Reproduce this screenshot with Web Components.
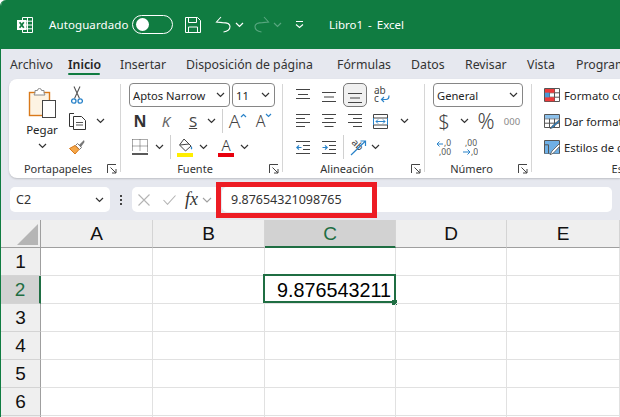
<!DOCTYPE html>
<html lang="es">
<head>
<meta charset="utf-8">
<title>Libro1 - Excel</title>
<style>
html, body { margin: 0; padding: 0; background: #fff; }
body { width: 620px; height: 417px; overflow: hidden; font-family: "Noto Sans", sans-serif; }
</style>
</head>
<body>
<xl-app>
  <xl-title-bar slot="top"></xl-title-bar>
  <xl-tabs></xl-tabs>
  <xl-ribbon>
    <xl-group label="Portapapeles" width="112" pad="9" launcher>
      <div style="display:flex;height:78px">
        <div style="width:48px;display:flex;flex-direction:column;align-items:center;font-size:11.5px;color:#242424;line-height:16px">
          <xl-icon name="paste" style="margin-top:6px"></xl-icon>
          <span style="margin-top:4px">Pegar</span>
          <xl-icon name="chev" style="margin-top:5px"></xl-icon>
        </div>
        <div>
          <xl-row><xl-tool w="22"><xl-icon name="cut"></xl-icon></xl-tool></xl-row>
          <xl-row><xl-tool w="22"><xl-icon name="copy"></xl-icon></xl-tool><xl-tool w="24"><xl-icon name="chev"></xl-icon></xl-tool></xl-row>
          <xl-row><xl-tool w="22"><xl-icon name="brush"></xl-icon></xl-tool></xl-row>
        </div>
      </div>
    </xl-group>
    <xl-group label="Fuente" width="162" pad="7" launcher>
      <xl-row><xl-select w="101" style="margin-left:1px">Aptos Narrow</xl-select><xl-select w="43" style="margin-left:2px">11</xl-select></xl-row>
      <xl-row>
        <xl-tool w="24"><b style="font-size:16px">N</b></xl-tool>
        <xl-tool w="28"><i style="font-size:15px;color:#666">K</i></xl-tool>
        <xl-tool w="26"><u style="font-size:15px;color:#444">S</u></xl-tool>
        <xl-tool w="10"><xl-icon name="chev"></xl-icon></xl-tool>
        <xl-tool w="13"><xl-sep></xl-sep></xl-tool>
        <xl-tool w="18"><span style="font-size:19px;color:#444;font-weight:300">A</span><xl-icon name="caretup" style="margin:-11px 0 0 0"></xl-icon></xl-tool>
        <xl-tool w="34"><span style="font-size:16px;color:#444;font-weight:300">A</span><xl-icon name="caretdown" style="margin:-11px 0 0 0"></xl-icon></xl-tool>
      </xl-row>
      <xl-row>
        <xl-tool w="24"><xl-icon name="borders"></xl-icon></xl-tool>
        <xl-tool w="14"><xl-icon name="chev"></xl-icon></xl-tool>
        <xl-tool w="8"><xl-sep></xl-sep></xl-tool>
        <xl-tool w="22"><xl-icon name="fill"></xl-icon></xl-tool>
        <xl-tool w="14"><xl-icon name="chev"></xl-icon></xl-tool>
        <xl-tool w="6"></xl-tool>
        <xl-tool w="20"><xl-color-a></xl-color-a></xl-tool>
        <xl-tool w="16"><xl-icon name="chev"></xl-icon></xl-tool>
      </xl-row>
    </xl-group>
    <xl-group label="Alineación" width="142" pad="7" launcher>
      <xl-row>
        <xl-tool w="26"><xl-icon name="atop"></xl-icon></xl-tool>
        <xl-tool w="26"><xl-icon name="amid"></xl-icon></xl-tool>
        <xl-tool w="24" selected><xl-icon name="abot"></xl-icon></xl-tool>
        <xl-tool w="27"><xl-icon name="wrap"></xl-icon></xl-tool>
      </xl-row>
      <xl-row>
        <xl-tool w="26"><xl-icon name="aleft"></xl-icon></xl-tool>
        <xl-tool w="26"><xl-icon name="acenter"></xl-icon></xl-tool>
        <xl-tool w="26"><xl-icon name="aright"></xl-icon></xl-tool>
        <xl-tool w="24"><xl-icon name="merge"></xl-icon></xl-tool>
        <xl-tool w="24"><xl-icon name="chev"></xl-icon></xl-tool>
      </xl-row>
      <xl-row>
        <xl-tool w="26"><xl-icon name="outdent"></xl-icon></xl-tool>
        <xl-tool w="26"><xl-icon name="indent"></xl-icon></xl-tool>
        <xl-tool w="2"><xl-sep></xl-sep></xl-tool>
        <xl-tool w="28"><xl-icon name="orient"></xl-icon></xl-tool>
        <xl-tool w="6"><xl-icon name="chev"></xl-icon></xl-tool>
      </xl-row>
    </xl-group>
    <xl-group label="Número" width="107" pad="8" launcher>
      <xl-row><xl-select w="90">General</xl-select></xl-row>
      <xl-row>
        <xl-tool w="22"><span style="font-size:20px;color:#444;font-weight:300">$</span></xl-tool>
        <xl-tool w="18"><xl-icon name="chev"></xl-icon></xl-tool>
        <xl-tool w="26"><span style="font-size:21px;color:#444;font-weight:300">%</span></xl-tool>
        <xl-tool w="26"><span style="font-size:9.5px;color:#888">000</span></xl-tool>
      </xl-row>
      <xl-row>
        <xl-tool w="22"><xl-icon name="decless"></xl-icon></xl-tool>
        <xl-tool w="30"><xl-icon name="decmore"></xl-icon></xl-tool>
      </xl-row>
    </xl-group>
    <xl-group label="Estilos" width="206" pad="9" launcher plain>
      <xl-style-row icon="condfmt">Formato condicional</xl-style-row>
      <xl-style-row icon="tblfmt">Dar formato como tabla</xl-style-row>
      <xl-style-row icon="cellfmt">Estilos de celda</xl-style-row>
    </xl-group>
  </xl-ribbon>
  <xl-formula-bar name="C2" value="9.87654321098765"></xl-formula-bar>
  <xl-sheet></xl-sheet>
</xl-app>

<script>
const chevron = '<svg width="9" height="6" viewBox="0 0 9 6"><path d="M1 1l3.5 3.5L8 1" fill="none" stroke="#333" stroke-width="1.2"/></svg>';
const lines = (rows) => rows.map(([x1, x2, y]) => `<path d="M${x1} ${y}H${x2}" stroke="#444" stroke-width="1.1"/>`).join("");
const ICONS = {
  chev: chevron,
  excel: '<svg width="16" height="16" viewBox="0 0 16 16"><path d="M5.5.5h10v15h-10zM10.5.5v15M5.5 4.2h10M5.5 8h10M5.5 11.8h10" fill="none" stroke="#fff"/><rect y="3" width="9.5" height="10" fill="#fff"/><path d="M2.6 5.2l4.2 5.6M6.8 5.2l-4.2 5.6" stroke="#107c41" stroke-width="1.7"/></svg>',
  save: '<svg width="16" height="16" viewBox="0 0 16 16"><path d="M.5.5h12l3 3v12H.5zM3.5.5v5h8v-5M3.5 15.5V10h9v5.5" fill="none" stroke="#fff"/></svg>',
  undo: '<svg width="16" height="17" viewBox="0 0 16 17"><path d="M6 1L1.5 6l6 .6C12 6.600 15 7.600 15 10.500 15 13.500 12 15.500 8.500 16" fill="none" stroke="#fff" stroke-width="1.1"/></svg>',
  redo: '<svg width="16" height="17" viewBox="0 0 16 17"><path d="M10 1l4.500 5-6 .6C4 6.600 1 7.600 1 10.500 1 13.500 4 15.500 7.500 16" fill="none" stroke="#58a67f" stroke-width="1.1"/></svg>',
  qat: '<svg width="9" height="8" viewBox="0 0 9 8"><path d="M1 .5h7M1 3.500l3.500 3 3.500-3" fill="none" stroke="#fff" stroke-width="1.1"/></svg>',
  paste: '<svg width="28" height="30" viewBox="0 0 28 30"><rect x="1.500" y="4.500" width="20" height="23" fill="#fdf3e3" stroke="#d9791a" stroke-width="1.400"/><path d="M7 5V2.500h2.500a2 2 0 0 1 4 0H16V5l1 2H6z" fill="#fff" stroke="#8a8a8a"/><rect x="14.500" y="12.500" width="13" height="17" fill="#fff" stroke="#444"/></svg>',
  cut: '<svg width="12" height="18" viewBox="0 0 12 18"><path d="M3 .5l5.500 12M9 .5L3.500 12.500" fill="none" stroke="#555" stroke-width="1.100"/><circle cx="2.800" cy="15" r="2.200" fill="none" stroke="#2a83c9" stroke-width="1.300"/><circle cx="9.200" cy="15" r="2.200" fill="none" stroke="#2a83c9" stroke-width="1.300"/></svg>',
  copy: '<svg width="17" height="17" viewBox="0 0 17 17"><path d="M5 .5H.5v13H5" fill="none" stroke="#333"/><path d="M4.500 3.500h8l4 4v9h-12z" fill="#fff" stroke="#333"/><path d="M7 9.500h7M7 12h7" stroke="#555"/></svg>',
  brush: '<svg width="16" height="16" viewBox="0 0 16 16"><path d="M15 1l-5 5 2 2 3.500-5z" fill="#777"/><path d="M8.500 4.500l4 4-2 2-4-4z" fill="#fff" stroke="#777"/><path d="M6 6.500l4 4-4 4.500-5.500-5.500z" fill="#f4a74a" stroke="#d9791a"/></svg>',
  caretup: '<svg width="7" height="5" viewBox="0 0 7 5"><path d="M1 4l2.500-2.500L6 4" fill="none" stroke="#2a83c9" stroke-width="1.200"/></svg>',
  caretdown: '<svg width="7" height="5" viewBox="0 0 7 5"><path d="M1 1l2.500 2.500L6 1" fill="none" stroke="#2a83c9" stroke-width="1.200"/></svg>',
  borders: '<svg width="16" height="16" viewBox="0 0 16 16"><path d="M.5.500h15v12M.5.500v12M8 .5v12M.5 7h15" fill="none" stroke="#555" stroke-dasharray="1 1"/><path d="M0 15h16" stroke="#222" stroke-width="1.300"/></svg>',
  fill: '<svg width="16" height="19" viewBox="0 0 16 19"><path d="M7 1l7 7-5.500 5L2.500 7z" fill="#fff" stroke="#444"/><path d="M3 7l9-1" stroke="#444"/><path d="M14.500 8c1 1.500 1 3 0 3.500-1-.5-1-2 0-3.500z" fill="#2a83c9"/><rect y="15" width="16" height="4" fill="#ffee00"/></svg>',
  launcher: '<svg width="10" height="10" viewBox="0 0 10 10"><path d="M.5 9V.5H9M3.500 3.500l5.500 5.500M9 5v4H5" fill="none" stroke="#444"/></svg>',
  atop: `<svg width="14" height="12" viewBox="0 0 14 12">${lines([[0, 14, .5], [2, 12, 5.500], [0, 14, 9.500]])}</svg>`,
  amid: `<svg width="14" height="12" viewBox="0 0 14 12" style="margin-top:5px">${lines([[0, 14, .5], [2, 12, 5], [0, 14, 9.500]])}</svg>`,
  abot: `<svg width="14" height="12" viewBox="0 0 14 12" style="margin-top:6px">${lines([[0, 14, 1.500], [2, 12, 6], [0, 14, 10.500]])}</svg>`,
  wrap: '<svg width="16" height="18" viewBox="0 0 16 18"><text x="0" y="8" font-family="Noto Sans" font-size="10" fill="#444">ab</text><text x="0" y="16" font-family="Noto Sans" font-size="10" fill="#444">c</text><path d="M15 9.500c0 3-1.500 4-3 4H7.500M10 11l-2.500 2.500L10 16" fill="none" stroke="#2a83c9" stroke-width="1.200"/></svg>',
  aleft: `<svg width="14" height="14" viewBox="0 0 14 14">${lines([[0, 14, .5], [0, 9, 4.500], [0, 14, 8.500], [0, 9, 12.500]])}</svg>`,
  acenter: `<svg width="14" height="14" viewBox="0 0 14 14">${lines([[0, 14, .5], [2.500, 11.500, 4.500], [0, 14, 8.500], [2.500, 11.500, 12.500]])}</svg>`,
  aright: `<svg width="14" height="14" viewBox="0 0 14 14">${lines([[0, 14, .5], [5, 14, 4.500], [0, 14, 8.500], [5, 14, 12.500]])}</svg>`,
  merge: '<svg width="15" height="15" viewBox="0 0 15 15"><path d="M.5.500h14v14H.5zM.5 4h14M.5 11h14" fill="none" stroke="#444"/><path d="M.5 4v7M14.500 4v7" stroke="#2a83c9"/><path d="M3 7.500h9M5 5.500l-2 2 2 2M10 5.500l2 2-2 2" fill="none" stroke="#2a83c9"/></svg>',
  outdent: `<svg width="14" height="13" viewBox="0 0 14 13">${lines([[0, 14, .5], [7, 14, 4.500], [7, 14, 8.500], [0, 14, 12.500]])}<path d="M5.500 6.500H.8M3 4.300L.8 6.500 3 8.700" fill="none" stroke="#2a83c9" stroke-width="1.200"/></svg>`,
  indent: `<svg width="14" height="13" viewBox="0 0 14 13">${lines([[0, 14, .5], [7, 14, 4.500], [7, 14, 8.500], [0, 14, 12.500]])}<path d="M.5 6.500h4.700M3 4.300l2.200 2.200L3 8.700" fill="none" stroke="#2a83c9" stroke-width="1.200"/></svg>`,
  orient: '<svg width="17" height="18" viewBox="0 0 17 18"><text x="0" y="0" font-family="Noto Sans" font-size="10" fill="#444" transform="translate(1 5) rotate(45)">ab</text><path d="M1 17L15 3.500M10.500 3H15.500V8" fill="none" stroke="#2a83c9" stroke-width="1.200"/></svg>',
  decless: '<svg width="16" height="17" viewBox="0 0 16 17"><text x="8" y="7" font-family="Noto Sans" font-size="8.500" fill="#555">,0</text><text x="3" y="16" font-family="Noto Sans" font-size="8.500" fill="#555">,00</text><path d="M7 5H1M3.500 2.500L1 5l2.500 2.500" fill="none" stroke="#2a83c9"/></svg>',
  decmore: '<svg width="16" height="17" viewBox="0 0 16 17"><text x="3" y="7" font-family="Noto Sans" font-size="8.500" fill="#555">,00</text><text x="9" y="16" font-family="Noto Sans" font-size="8.500" fill="#555">,0</text><path d="M1 13h7M5.500 10.500L8 13l-2.500 2.500" fill="none" stroke="#2a83c9"/></svg>',
  condfmt: '<svg width="16" height="14" viewBox="0 0 16 14"><path d="M.5.500h15v13H.5zM5.500.5v13M10.500.5v13M.5 4.800h15M.5 9.200h15" fill="none" stroke="#555"/><path d="M1 1h4.500v3.800H1zM1 9.200h4.500v4H1zM5.500 1h5v3.800h-5zM5.500 9.200h5v4h-5z" fill="#ee3b3b"/><path d="M1 4.800h4.500v4.400H1z" fill="#4a9ad8"/></svg>',
  tblfmt: '<svg width="16" height="15" viewBox="0 0 16 15"><path d="M.5.500h15v13H.5zM5.500.5v13M10.500.5v13M.5 4.800h15M.5 9.200h15" fill="none" stroke="#555"/><path d="M1 1h14v3.500H1z" fill="#8cc0ea"/><path d="M15 6l-7 6-2 3 3-1.500 6.500-6z" fill="#2a83c9" stroke="#555" stroke-width=".6"/></svg>',
  cellfmt: '<svg width="16" height="15" viewBox="0 0 16 15"><path d="M.5.500h15v13H.5z" fill="none" stroke="#555"/><path d="M1 1h14v12.500H1z" fill="#6fb0e6"/><path d="M.5 4.800h4v8.700" fill="none" stroke="#555"/><path d="M15 4l-7 7-2 4 3.500-2 6.500-7z" fill="#fff" stroke="#555" stroke-width=".8"/></svg>',
  fx_x: '<svg width="12" height="12" viewBox="0 0 12 12"><path d="M.5.500l11 11M11.500.5l-11 11" stroke="#b4b4b4" stroke-width="1.100"/></svg>',
  fx_ok: '<svg width="13" height="10" viewBox="0 0 13 10"><path d="M.5 5l4 4.300L12.500.5" fill="none" stroke="#b4b4b4" stroke-width="1.100"/></svg>',
  grey: '<svg width="10" height="6" viewBox="0 0 10 6"><path d="M1 1l4 4 4-4" fill="none" stroke="#a0a0a0" stroke-width="1.100"/></svg>'
};

class XlIcon extends HTMLElement {
  connectedCallback() {
    if (this.shadowRoot) return;
    const root = this.attachShadow({mode: "open"});
    root.innerHTML = `<style>:host{display:inline-flex;line-height:0}</style>${ICONS[this.getAttribute("name")] || ""}`;
  }
}

class XlApp extends HTMLElement {
  constructor() {
    super();
    this.attachShadow({mode: "open"}).innerHTML = `
    <style>
    :host {
      display: block;
      position: relative;
      width: 620px;
      height: 417px;
      box-sizing: border-box;
      overflow: hidden;
      background: #e6e8ef;
      border-left: 1px solid #107c41;
      border-top-left-radius: 6px;
    }
    </style>
    <slot name="top"></slot>
    <slot></slot>`;
  }
}

class XlTitleBar extends HTMLElement {
  constructor() {
    super();
    this.attachShadow({mode: "open"}).innerHTML = `
    <style>
    :host {
      display: flex;
      align-items: center;
      height: 49px;
      margin-left: -1px;
      padding-left: 17px;
      background: #107c41;
      color: #fff;
      font: 11.500px "Noto Sans", sans-serif;
      white-space: nowrap;
    }
    .auto { margin-left: 16px; width: 83px; letter-spacing: .1px; }
    .toggle {
      width: 36px;
      height: 17px;
      border: 1.500px solid #fff;
      border-radius: 11px;
      display: flex;
      align-items: center;
      padding-left: 3px;
      box-sizing: content-box;
    }
    .knob { width: 13px; height: 13px; border-radius: 50%; background: #fff; }
    .title { margin-left: 25px; font-size: 11.500px; word-spacing: 2px; }
    </style>
    <xl-icon name="excel"></xl-icon>
    <span class="auto">Autoguardado</span>
    <span class="toggle"><span class="knob"></span></span>
    <xl-icon name="save" style="margin-left:12px"></xl-icon>
    <xl-icon name="undo" style="margin-left:14px"></xl-icon>
    <svg width="9" height="6" viewBox="0 0 9 6" style="margin-left:4px"><path d="M1 1l3.500 3.500L8 1" fill="none" stroke="#fff" stroke-width="1.200"/></svg>
    <xl-icon name="redo" style="margin-left:10px"></xl-icon>
    <svg width="9" height="6" viewBox="0 0 9 6" style="margin-left:3px"><path d="M1 1l3.500 3.500L8 1" fill="none" stroke="#58a67f" stroke-width="1.200"/></svg>
    <xl-icon name="qat" style="margin-left:13px"></xl-icon>
    <span class="title">Libro1 - Excel</span>`;
  }
}

class XlTabs extends HTMLElement {
  constructor() {
    super();
    const tabs = [["Archivo", 58], ["Inicio", 52], ["Insertar", 66], ["Disposición de página", 151], ["Fórmulas", 74], ["Datos", 54], ["Revisar", 62], ["Vista", 49], ["Programador", 90]];
    this.attachShadow({mode: "open"}).innerHTML = `
    <style>
    :host {
      display: flex;
      height: 30px;
      padding-left: 9px;
      box-sizing: border-box;
      font: 12.300px/31px "Noto Sans", sans-serif;
      color: #333;
      white-space: nowrap;
    }
    .tab { position: relative; flex: none; }
    .on { font-weight: 600; color: #242424; }
    .on::after {
      content: "";
      position: absolute;
      left: 0;
      width: 32px;
      top: 24px;
      height: 2px;
      background: #107c41;
      border-radius: 1px;
    }
    </style>
    ${tabs.map(([t, w]) => `<span class="tab${t === "Inicio" ? " on" : ""}" style="width:${w}px">${t}</span>`).join("")}`;
  }
}

class XlRibbon extends HTMLElement {
  constructor() {
    super();
    this.attachShadow({mode: "open"}).innerHTML = `
    <style>
    :host {
      display: flex;
      margin-left: 8px;
      height: 99px;
      background: #fff;
      border-radius: 8px 0 0 8px;
      box-shadow: 0 1px 2px rgba(0,0,0,.18);
      overflow: hidden;
    }
    </style>
    <slot></slot>`;
  }
}

class XlGroup extends HTMLElement {
  constructor() {
    super();
    const label = this.getAttribute("label");
    const plain = this.hasAttribute("plain");
    this.attachShadow({mode: "open"}).innerHTML = `
    <style>
    :host {
      display: block;
      flex: none;
      position: relative;
      box-sizing: border-box;
      width: ${this.getAttribute("width")}px;
      font: 12px "Noto Sans", sans-serif;
      color: #333;
    }
    .body { height: 81px; padding: 3px 0 0 ${this.getAttribute("pad")}px; box-sizing: border-box; white-space: nowrap; }
    .foot {
      display: grid;
      grid-template-columns: 1fr 12px;
      height: 18px;
      padding-right: 2px;
      align-items: start;
      text-align: center;
      line-height: 17px;
      font-size: 11px;
    }
    .launch { margin-top: 4px; }
    .rule {
      position: absolute;
      right: 0;
      top: 5px;
      bottom: 6px;
      width: 1px;
      background: #d6d6d6;
      display: ${plain ? "none" : "block"};
    }
    </style>
    <div class="body"><slot></slot></div>
    <div class="foot"><span>${label}</span>${plain ? "<span></span>" : '<xl-icon class="launch" name="launcher"></xl-icon>'}</div>
    <div class="rule"></div>`;
  }
}

class XlRow extends HTMLElement {
  constructor() {
    super();
    this.attachShadow({mode: "open"}).innerHTML = `
    <style>:host { display: flex; align-items: center; height: 26px; }</style>
    <slot></slot>`;
  }
}

class XlTool extends HTMLElement {
  constructor() {
    super();
    const selected = this.hasAttribute("selected");
    this.attachShadow({mode: "open"}).innerHTML = `
    <style>
    :host {
      display: flex;
      flex: none;
      align-items: center;
      justify-content: center;
      box-sizing: border-box;
      width: ${this.getAttribute("w")}px;
      height: ${selected ? 24 : 26}px;
      color: #333;
      ${selected ? "margin:0 1px;background:#f0f0f0;border:1px solid #777;border-radius:5px;" : ""}
    }
    </style>
    <slot></slot>`;
  }
}

class XlSep extends HTMLElement {
  constructor() {
    super();
    this.attachShadow({mode: "open"}).innerHTML = `
    <style>:host { display: block; width: 1px; height: 24px; background: #d0d0d0; }</style>`;
  }
}

class XlSelect extends HTMLElement {
  constructor() {
    super();
    this.attachShadow({mode: "open"}).innerHTML = `
    <style>
    :host {
      display: flex;
      flex: none;
      align-items: center;
      justify-content: space-between;
      box-sizing: border-box;
      width: ${this.getAttribute("w")}px;
      height: 24px;
      padding: 0 4px 0 3px;
      border: 1px solid #868686;
      border-radius: 4px;
      font: 11.200px "Noto Sans", sans-serif;
      color: #242424;
    }
    </style>
    <slot></slot><xl-icon name="chev"></xl-icon>`;
  }
}

class XlColorA extends HTMLElement {
  constructor() {
    super();
    this.attachShadow({mode: "open"}).innerHTML = `
    <style>
    :host { display: flex; flex-direction: column; align-items: center; width: 16px; font: 300 15px/14px "Noto Sans", sans-serif; color: #333; }
    i { display: block; width: 16px; height: 4px; background: #e8000d; margin-top: 1px; }
    </style>
    <span>A</span><i></i>`;
  }
}

class XlStyleRow extends HTMLElement {
  constructor() {
    super();
    this.attachShadow({mode: "open"}).innerHTML = `
    <style>
    :host { display: flex; align-items: center; gap: 4px; height: 26px; padding-left: 3px; font: 11.300px "Noto Sans", sans-serif; color: #242424; white-space: nowrap; }
    </style>
    <xl-icon name="${this.getAttribute("icon")}"></xl-icon><slot></slot>`;
  }
}

class XlFormulaBar extends HTMLElement {
  constructor() {
    super();
    this.attachShadow({mode: "open"}).innerHTML = `
    <style>
    :host {
      display: flex;
      align-items: center;
      position: relative;
      height: 42px;
      padding: 1px 8px 0 9px;
      box-sizing: border-box;
      font: 12.500px "Noto Sans", sans-serif;
      color: #333;
    }
    .box { height: 25px; background: #fff; border-radius: 5px; display: flex; align-items: center; box-sizing: border-box; }
    .name { width: 100px; padding: 0 6px 0 6px; justify-content: space-between; }
    .dots { width: 22px; display: flex; flex-direction: column; align-items: center; gap: 2px; }
    .dots i { width: 2px; height: 2px; background: #444; }
    .fn { width: 85px; padding-left: 6px; gap: 13px; border-radius: 5px 0 0 5px; }
    .fx { font: italic 18px "Liberation Serif", serif; margin-left: -4px; }
    .input { flex: 1; margin-left: 5px; padding-left: 9px; }
    .mark {
      position: absolute;
      left: 215px;
      top: 4px;
      width: 161px;
      height: 36px;
      box-sizing: border-box;
      border: 5px solid #ed1c24;
    }
    </style>
    <div class="box name"><span>${this.getAttribute("name")}</span><xl-icon name="chev"></xl-icon></div>
    <div class="dots"><i></i><i></i><i></i></div>
    <div class="box fn"><xl-icon name="fx_x"></xl-icon><xl-icon name="fx_ok"></xl-icon><span class="fx">fx</span><xl-icon name="grey" style="margin-left:-9px"></xl-icon></div>
    <div class="box input">${this.getAttribute("value")}</div>
    <div class="mark"></div>`;
  }
}

class XlSheet extends HTMLElement {
  constructor() {
    super();
    const cols = ["A", "B", "C", "D", "E"];
    const head = cols.map(c => `<div class="h col${c === "C" ? " sel" : ""}">${c}</div>`).join("");
    let rows = "";
    for (let r = 1; r <= 7; r++) {
      rows += `<div class="h row${r === 2 ? " sel" : ""}">${r}</div>`;
      rows += cols.map(c => {
        if (r === 2 && c === "C") return '<div class="cell"><span class="val">9.876543211</span><div class="active"></div></div>';
        return '<div class="cell"></div>';
      }).join("");
    }
    this.attachShadow({mode: "open"}).innerHTML = `
    <style>
    :host {
      display: grid;
      grid-template-columns: 40px 112px 112px 131px 111px 113px;
      grid-auto-rows: 28px;
      background: #fff;
      font: 19px "Liberation Sans", sans-serif;
      color: #111;
    }
    .h {
      display: flex;
      align-items: center;
      justify-content: center;
      box-sizing: border-box;
      padding-top: 1px;
      background: #efefef;
      border-right: 1px solid #d4d4d4;
      border-bottom: 1px solid #9f9f9f;
    }
    .corner { position: relative; border-right: 1px solid #9f9f9f; }
    .corner svg { position: absolute; left: 16px; top: 4px; }
    .row { border-right: 1px solid #9f9f9f; border-bottom: 1px solid #d4d4d4; }
    .h.sel { background: #d2d2d2; color: #1f6e43; }
    .col.sel { border-bottom: 2px solid #1f6e43; }
    .row.sel { border-right: 2px solid #1f6e43; }
    .cell {
      position: relative;
      box-sizing: border-box;
      display: flex;
      align-items: center;
      justify-content: flex-end;
      border-right: 1px solid #e1e1e1;
      border-bottom: 1px solid #e1e1e1;
    }
    .val { font-size: 19.800px; margin: 2px 4px 0 0; color: #000; }
    .active { position: absolute; left: -2px; top: -2px; right: -1px; bottom: 0; border: 2px solid #1f6e43; }
    .active::after {
      content: "";
      position: absolute;
      right: -3px;
      bottom: -4px;
      width: 5px;
      height: 5px;
      background: #1f6e43;
    }
    </style>
    <div class="h corner"><svg width="21" height="21" viewBox="0 0 21 21"><path d="M21 0v21H0z" fill="#b5b5b5"/></svg></div>
    ${head}${rows}`;
  }
}

customElements.define("xl-icon", XlIcon);
customElements.define("xl-app", XlApp);
customElements.define("xl-title-bar", XlTitleBar);
customElements.define("xl-tabs", XlTabs);
customElements.define("xl-ribbon", XlRibbon);
customElements.define("xl-group", XlGroup);
customElements.define("xl-row", XlRow);
customElements.define("xl-tool", XlTool);
customElements.define("xl-sep", XlSep);
customElements.define("xl-select", XlSelect);
customElements.define("xl-color-a", XlColorA);
customElements.define("xl-style-row", XlStyleRow);
customElements.define("xl-formula-bar", XlFormulaBar);
customElements.define("xl-sheet", XlSheet);
</script>
</body>
</html>
